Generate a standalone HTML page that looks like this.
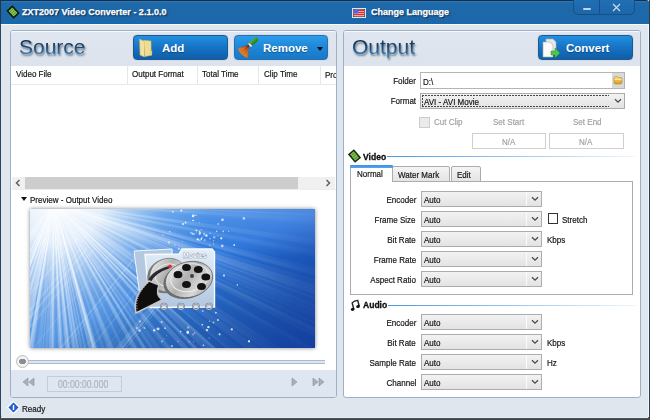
<!DOCTYPE html>
<html><head><meta charset="utf-8"><style>
*{margin:0;padding:0;box-sizing:border-box}
html,body{width:650px;height:420px;overflow:hidden;background:#2e2a26}
body{position:relative;font-family:"Liberation Sans",sans-serif;font-size:9.5px;line-height:11px;color:#141414}
.a{position:absolute}
.t{white-space:nowrap;-webkit-text-stroke:.2px currentColor;transform:scaleX(.845);transform-origin:0 0}
.t.r{transform-origin:100% 0}
.g{color:#a2a2a2}
.tt{color:#fff;font-weight:bold;font-size:9px;-webkit-text-stroke:.25px #fff;text-shadow:1px 1px 1.5px #041c3a;white-space:nowrap}
.panel{background:#fff;border:1px solid #9cb0c6;border-radius:3px}
.phead{background:linear-gradient(#dfe6ef,#dce3ec);border-top:1px solid #f8fbfd}
.big{font-size:21px;line-height:24px;white-space:nowrap;color:rgba(0,0,0,0);text-shadow:1px 2px 2px rgba(20,40,60,.55)}
.bigg{font-size:21px;line-height:24px;white-space:nowrap;color:transparent;background:linear-gradient(#0c2440 15%,#1f4a72 50%,#3f88c4 92%);-webkit-background-clip:text;background-clip:text}
.btn{border:1px solid #1d5a92;border-radius:4px;background:linear-gradient(#2290e2,#1673c4 50%,#0f5ea8);box-shadow:0 0 1px rgba(20,60,100,.5)}
.btn2{border-color:#2570b0;background:linear-gradient(#2c9cec,#1e86d6 50%,#1978c8)}
.bt{color:#fff;font-weight:bold;font-size:11.5px;line-height:14px;white-space:nowrap;text-shadow:0 1px 1px rgba(0,0,0,.35)}
.sel{border:1px solid #acacac;background:linear-gradient(#f2f2f2,#e3e3e3)}
.sel i{position:absolute;right:14px;top:0;width:1px;height:100%;background:#fcfcfc}
.sel svg{position:absolute;right:2px;top:4px}
.sep{width:1px;background:#e4e8ee}
</style></head><body>
<div class="a" style="left:0;top:0;width:650px;height:418px;background:#dfe6ee;border-left:1px solid #2c4560;border-right:1px solid #26405a;border-radius:0 0 3px 3px"></div>
<div class="a" style="left:648px;top:24px;width:1px;height:393px;background:#f2f6fa"></div>
<div class="a" style="left:0;top:0;width:649px;height:24px;background:linear-gradient(#3478b6 0,#1e69aa 2px,#1c67a9);border-top:1px solid #16304a;border-left:1px solid #24364c;border-radius:0 3px 0 0"></div>
<div class="a" style="left:1px;top:24px;width:647px;height:1px;background:#f6f9fc"></div>
<svg class="a" style="left:6px;top:5px" width="14" height="14"><g transform="rotate(-42 7 7)"><rect x="3.6" y="2.4" width="6.8" height="9.2" fill="#86c84a" stroke="#0e1a0a" stroke-width="1.6"/><path d="M4.8 4.8H9.2M4.8 7H9.2M4.8 9.2H9.2" stroke="#4a8a2a" stroke-width=".8"/></g></svg>
<div class="a tt" style="left:22px;top:7px">ZXT2007 Video Converter - 2.1.0.0</div>
<svg class="a" style="left:352px;top:8px" width="14" height="10"><rect x=".5" y=".5" width="13" height="9" fill="none" stroke="#dfe8f2"/><rect x="1" y="1" width="12" height="8" fill="#222"/><rect x="1.5" y="1.5" width="11" height="7" fill="#f4a8a8"/><path d="M1.5 2.5H12.5M1.5 4.5H12.5M1.5 6.5H12.5" stroke="#e02c2c" stroke-width="1"/><rect x="1.5" y="1.5" width="5" height="4" fill="#5a64e0"/></svg>
<div class="a tt" style="left:371px;top:7px">Change Language</div>
<div class="a" style="left:573px;top:-3px;width:62px;height:18px;border:1px solid #15508a;border-radius:0 0 5px 5px;background:linear-gradient(#2170b4,#1d66aa)"></div>
<div class="a" style="left:599px;top:0;width:1px;height:14px;background:#15508a"></div>
<div class="a" style="left:583px;top:8px;width:8px;height:2px;background:#c4d4e4;border-radius:1px"></div>
<svg class="a" style="left:612px;top:3px" width="9" height="9"><path d="M1 1L8 8M8 1L1 8" stroke="#d4e0ec" stroke-width="1.1"/></svg>
<div class="a panel" style="left:10px;top:30px;width:327px;height:368px"></div>
<div class="a phead" style="left:11px;top:31px;width:325px;height:35px;border-radius:2px 2px 0 0"></div>
<div class="a big" style="left:19px;top:35px">Source</div>
<div class="a bigg" style="left:19px;top:35px">Source</div>
<div class="a btn" style="left:133px;top:35px;width:95px;height:25px"></div>
<svg class="a" style="left:138px;top:38px" width="16" height="20"><defs><linearGradient id="fy" x1="0" x2="1"><stop offset="0" stop-color="#f0d888"/><stop offset="1" stop-color="#f8eab8"/></linearGradient></defs><path d="M5.5 2.2L13 3L13.2 17.2L7 18.5Z" fill="#f0dc90" stroke="#d8b860" stroke-width=".5"/><path d="M12.2 12.5L14.2 13L14 17.3L12.4 17.5Z" fill="#e8cc70"/><path d="M1.5 1L6 3.2L6.5 19L2 17Z" fill="url(#fy)" stroke="#d0b060" stroke-width=".5"/></svg>
<div class="a bt" style="left:162px;top:41px">Add</div>
<div class="a btn btn2" style="left:234px;top:35px;width:94px;height:25px"></div>
<svg class="a" style="left:236px;top:37px" width="22" height="22"><defs><linearGradient id="br" x1="0" y1="1" x2="1" y2="0"><stop offset="0" stop-color="#f8a040"/><stop offset=".55" stop-color="#d06818"/><stop offset="1" stop-color="#7a1a08"/></linearGradient><linearGradient id="hd" x1="0" y1="0" x2="1" y2="1"><stop offset="0" stop-color="#5cc040"/><stop offset="1" stop-color="#1a6a10"/></linearGradient></defs><path d="M15.2 6.8L20.2 2.4" stroke="url(#hd)" stroke-width="4.4" stroke-linecap="round"/><path d="M12.6 6.6L15.6 9.4" stroke="#f4f4f4" stroke-width="1.6"/><path d="M13.2 7.6L1.8 11.4Q4.5 18.5 11.8 21Z" fill="url(#br)"/><path d="M5 13L10 10M7 16L11.5 11M9.5 19L12.5 12" stroke="#f8b060" stroke-width=".6" opacity=".6"/></svg>
<div class="a bt" style="left:263px;top:41px">Remove</div>
<div class="a" style="left:317px;top:47px;width:0;height:0;border-left:3.5px solid transparent;border-right:3.5px solid transparent;border-top:4px solid #0a0a0a"></div>
<div class="a t" style="left:16px;top:68.4px;">Video File</div>
<div class="a sep" style="left:127px;top:66px;height:18px"></div>
<div class="a t" style="left:132px;top:68.4px;">Output Format</div>
<div class="a sep" style="left:197px;top:66px;height:18px"></div>
<div class="a t" style="left:202px;top:68.4px;">Total Time</div>
<div class="a sep" style="left:258px;top:66px;height:18px"></div>
<div class="a t" style="left:264px;top:68.4px;">Clip Time</div>
<div class="a sep" style="left:320px;top:66px;height:18px"></div>
<div class="a" style="left:325px;top:69px;width:11px;height:12px;overflow:hidden"><div class="t">Pro</div></div>
<div class="a" style="left:11px;top:84px;width:325px;height:1px;background:#e6ebf1"></div>
<div class="a" style="left:12px;top:177px;width:323px;height:12px;background:#f0f0f0"></div>
<div class="a" style="left:25px;top:177px;width:273px;height:12px;background:#cdcdcd"></div>
<svg class="a" style="left:15px;top:179px" width="6" height="8"><path d="M4.5 1L1.5 4L4.5 7" fill="none" stroke="#606060" stroke-width="1.5"/></svg>
<svg class="a" style="left:325px;top:179px" width="6" height="8"><path d="M1.5 1L4.5 4L1.5 7" fill="none" stroke="#606060" stroke-width="1.5"/></svg>
<div class="a" style="left:11px;top:189px;width:325px;height:1px;background:#e8eef6"></div>
<div class="a" style="left:21px;top:197px;width:0;height:0;border-left:3.5px solid transparent;border-right:3.5px solid transparent;border-top:4px solid #111"></div>
<div class="a t" style="left:30px;top:194.4px;">Preview - Output Video</div>
<svg class="a" style="left:30px;top:209px;box-shadow:0 0 4px rgba(0,0,0,.5)" width="285" height="139"><defs>
<linearGradient id="bg" x1="0" y1="0" x2="1" y2="0">
<stop offset="0" stop-color="#5a98e2"/><stop offset=".35" stop-color="#3c84dc"/><stop offset=".6" stop-color="#2a76dc"/><stop offset="1" stop-color="#1e62d4"/>
</linearGradient>
<linearGradient id="bg2" x1="0" y1="0" x2="1" y2="1">
<stop offset="0" stop-color="#000" stop-opacity="0"/><stop offset=".5" stop-color="#000" stop-opacity="0"/><stop offset="1" stop-color="#081c70" stop-opacity=".5"/>
</linearGradient>
<linearGradient id="bg3" x1="0" y1="0" x2="0" y2="1">
<stop offset="0" stop-color="#a0d4ff" stop-opacity=".35"/><stop offset=".35" stop-color="#a0d4ff" stop-opacity="0"/>
</linearGradient>
<radialGradient id="gl" cx="28" cy="-10" r="150" gradientUnits="userSpaceOnUse">
<stop offset="0" stop-color="#fff" stop-opacity="1"/><stop offset=".3" stop-color="#fff" stop-opacity=".8"/><stop offset=".7" stop-color="#d8ecff" stop-opacity=".2"/><stop offset="1" stop-color="#a0d0ff" stop-opacity="0"/>
</radialGradient>
<radialGradient id="rg" cx="24" cy="-6" r="260" gradientUnits="userSpaceOnUse">
<stop offset="0" stop-color="#fff" stop-opacity="1"/><stop offset=".3" stop-color="#fff" stop-opacity=".6"/><stop offset=".6" stop-color="#fff" stop-opacity=".22"/><stop offset="1" stop-color="#fff" stop-opacity=".05"/>
</radialGradient>
<linearGradient id="reel" x1="0" y1="0" x2="1" y2="1"><stop offset="0" stop-color="#f8f8f8"/><stop offset=".45" stop-color="#b0b0b0"/><stop offset=".7" stop-color="#d8d8d8"/><stop offset="1" stop-color="#8a8a8a"/></linearGradient>
<linearGradient id="fold" x1="0" y1="0" x2="0" y2="1"><stop offset="0" stop-color="#e4eef8"/><stop offset="1" stop-color="#b0c6e0"/></linearGradient>
</defs>
<rect width="285" height="139" fill="url(#bg)"/>
<rect width="285" height="139" fill="url(#bg2)"/>
<rect width="285" height="139" fill="url(#bg3)"/>
<path d="M24 -6L25.2 414.0L17.2 413.9Z" fill="url(#rg)" opacity="0.76"/><path d="M24 -6L7.3 413.7L-1.3 413.2Z" fill="url(#rg)" opacity="0.35"/><path d="M24 -6L-126.2 386.2L-131.8 384.0Z" fill="url(#rg)" opacity="0.30"/><path d="M24 -6L377.9 220.2L376.4 222.5Z" fill="url(#rg)" opacity="0.39"/><path d="M24 -6L-223.8 333.1L-231.7 327.2Z" fill="url(#rg)" opacity="0.61"/><path d="M24 -6L443.6 11.4L443.5 14.3Z" fill="url(#rg)" opacity="0.33"/><path d="M24 -6L436.8 71.6L435.2 79.4Z" fill="url(#rg)" opacity="0.16"/><path d="M24 -6L-154.3 374.3L-163.5 369.8Z" fill="url(#rg)" opacity="0.54"/><path d="M24 -6L-43.4 408.6L-49.0 407.6Z" fill="url(#rg)" opacity="0.50"/><path d="M24 -6L-239.5 321.0L-248.0 314.0Z" fill="url(#rg)" opacity="0.71"/><path d="M24 -6L231.1 359.4L228.4 360.9Z" fill="url(#rg)" opacity="0.41"/><path d="M24 -6L128.8 400.7L121.9 402.4Z" fill="url(#rg)" opacity="0.72"/><path d="M24 -6L-159.7 371.7L-164.0 369.6Z" fill="url(#rg)" opacity="0.25"/><path d="M24 -6L83.8 409.7L76.7 410.7Z" fill="url(#rg)" opacity="0.79"/><path d="M24 -6L403.0 175.1L400.5 180.1Z" fill="url(#rg)" opacity="0.42"/><path d="M24 -6L431.8 94.5L428.9 105.8Z" fill="url(#rg)" opacity="0.49"/><path d="M24 -6L436.1 75.3L435.5 78.2Z" fill="url(#rg)" opacity="0.19"/><path d="M24 -6L262.1 340.0L255.7 344.3Z" fill="url(#rg)" opacity="0.56"/><path d="M24 -6L390.9 198.4L385.9 207.2Z" fill="url(#rg)" opacity="0.20"/><path d="M24 -6L424.3 121.1L422.6 126.4Z" fill="url(#rg)" opacity="0.22"/><path d="M24 -6L-129.3 385.0L-141.5 380.0Z" fill="url(#rg)" opacity="0.42"/><path d="M24 -6L427.1 111.8L424.2 121.5Z" fill="url(#rg)" opacity="0.45"/><path d="M24 -6L349.4 259.6L345.9 263.8Z" fill="url(#rg)" opacity="0.22"/><path d="M24 -6L171.8 387.1L168.9 388.2Z" fill="url(#rg)" opacity="0.41"/><path d="M24 -6L409.2 161.4L405.3 170.2Z" fill="url(#rg)" opacity="0.24"/><path d="M24 -6L95.3 407.9L87.2 409.2Z" fill="url(#rg)" opacity="0.78"/><path d="M24 -6L-171.3 365.8L-174.9 363.9Z" fill="url(#rg)" opacity="0.35"/><path d="M24 -6L-142.1 379.8L-146.2 377.9Z" fill="url(#rg)" opacity="0.39"/><path d="M24 -6L-208.9 343.5L-220.5 335.5Z" fill="url(#rg)" opacity="0.36"/><path d="M24 -6L-5.9 412.9L-9.4 412.7Z" fill="url(#rg)" opacity="0.48"/><path d="M24 -6L355.7 251.6L348.9 260.2Z" fill="url(#rg)" opacity="0.23"/><path d="M24 -6L376.6 222.1L373.4 227.0Z" fill="url(#rg)" opacity="0.36"/><path d="M24 -6L391.2 197.8L388.8 202.2Z" fill="url(#rg)" opacity="0.17"/><path d="M24 -6L-162.3 370.4L-167.4 367.9Z" fill="url(#rg)" opacity="0.59"/><path d="M24 -6L246.7 350.1L242.0 353.0Z" fill="url(#rg)" opacity="0.26"/><path d="M24 -6L321.1 290.9L316.3 295.6Z" fill="url(#rg)" opacity="0.35"/><path d="M24 -6L288.7 320.1L278.2 328.3Z" fill="url(#rg)" opacity="0.45"/><path d="M24 -6L-37.9 409.4L-47.3 407.9Z" fill="url(#rg)" opacity="0.63"/><path d="M24 -6L443.6 11.7L442.8 25.2Z" fill="url(#rg)" opacity="0.16"/><path d="M24 -6L-222.6 334.0L-230.7 327.9Z" fill="url(#rg)" opacity="0.26"/><path d="M24 -6L-82.9 400.2L-97.0 396.2Z" fill="url(#rg)" opacity="0.43"/><path d="M24 -6L413.9 150.2L408.7 162.6Z" fill="url(#rg)" opacity="0.41"/><path d="M24 -6L-66.2 404.2L-79.5 401.1Z" fill="url(#rg)" opacity="0.69"/><path d="M24 -6L-54.5 406.6L-67.3 404.0Z" fill="url(#rg)" opacity="0.75"/><path d="M24 -6L-123.2 387.4L-131.9 384.0Z" fill="url(#rg)" opacity="0.72"/><path d="M24 -6L141.6 397.2L132.2 399.8Z" fill="url(#rg)" opacity="0.57"/><path d="M24 -6L403.4 174.1L397.6 185.9Z" fill="url(#rg)" opacity="0.50"/><path d="M24 -6L137.5 398.4L128.4 400.8Z" fill="url(#rg)" opacity="0.65"/><path d="M24 -6L-151.3 375.7L-161.7 370.7Z" fill="url(#rg)" opacity="0.30"/><path d="M24 -6L406.2 168.2L404.0 172.8Z" fill="url(#rg)" opacity="0.32"/><path d="M24 -6L69.2 411.6L55.6 412.8Z" fill="url(#rg)" opacity="0.59"/><path d="M24 -6L443.8 6.5L443.4 17.1Z" fill="url(#rg)" opacity="0.26"/><path d="M24 -6L440.2 50.5L438.6 60.8Z" fill="url(#rg)" opacity="0.47"/><path d="M24 -6L-183.1 359.4L-192.1 354.1Z" fill="url(#rg)" opacity="0.43"/><path d="M24 -6L424.7 119.9L420.4 132.8Z" fill="url(#rg)" opacity="0.43"/><path d="M24 -6L138.5 398.1L132.6 399.7Z" fill="url(#rg)" opacity="0.57"/><path d="M24 -6L418.7 137.6L414.1 149.5Z" fill="url(#rg)" opacity="0.44"/><path d="M24 -6L-218.1 337.2L-221.6 334.7Z" fill="url(#rg)" opacity="0.40"/><path d="M24 -6L206.4 372.3L199.7 375.5Z" fill="url(#rg)" opacity="0.37"/><path d="M24 -6L70.9 411.4L58.3 412.6Z" fill="url(#rg)" opacity="0.42"/><path d="M24 -6L93.0 408.3L90.4 408.7Z" fill="url(#rg)" opacity="0.29"/><path d="M24 -6L330.7 281.0L324.2 287.7Z" fill="url(#rg)" opacity="0.64"/><path d="M24 -6L-126.3 386.2L-129.9 384.8Z" fill="url(#rg)" opacity="0.26"/><path d="M24 -6L336.7 274.3L333.3 278.2Z" fill="url(#rg)" opacity="0.71"/><path d="M24 -6L443.3 17.8L442.8 25.6Z" fill="url(#rg)" opacity="0.37"/><path d="M24 -6L-34.4 409.9L-48.3 407.7Z" fill="url(#rg)" opacity="0.69"/><path d="M24 -6L248.8 348.8L245.1 351.1Z" fill="url(#rg)" opacity="0.51"/><path d="M24 -6L419.6 135.2L418.1 139.3Z" fill="url(#rg)" opacity="0.40"/><path d="M24 -6L430.5 99.5L428.3 107.9Z" fill="url(#rg)" opacity="0.39"/><path d="M24 -6L-100.4 395.1L-111.9 391.4Z" fill="url(#rg)" opacity="0.47"/><path d="M24 -6L310.0 301.6L301.7 309.1Z" fill="url(#rg)" opacity="0.76"/><path d="M24 -6L422.7 126.0L418.3 138.7Z" fill="url(#rg)" opacity="0.37"/><path d="M24 -6L21.3 414.0L9.2 413.7Z" fill="url(#rg)" opacity="0.73"/><path d="M24 -6L86.7 409.3L82.0 410.0Z" fill="url(#rg)" opacity="0.61"/><path d="M24 -6L-139.4 380.9L-149.6 376.5Z" fill="url(#rg)" opacity="0.60"/><path d="M24 -6L367.1 236.2L358.6 247.8Z" fill="url(#rg)" opacity="0.49"/><path d="M24 -6L-121.4 388.0L-134.0 383.2Z" fill="url(#rg)" opacity="0.43"/><path d="M24 -6L161.8 390.7L154.6 393.2Z" fill="url(#rg)" opacity="0.30"/><path d="M24 -6L-112.5 391.2L-114.9 390.4Z" fill="url(#rg)" opacity="0.52"/><path d="M24 -6L318.5 293.4L315.4 296.4Z" fill="url(#rg)" opacity="0.69"/><path d="M24 -6L-124.0 387.1L-127.8 385.6Z" fill="url(#rg)" opacity="0.33"/><path d="M24 -6L-80.3 400.8L-90.8 398.0Z" fill="url(#rg)" opacity="0.71"/><path d="M24 -6L67.1 411.8L63.9 412.1Z" fill="url(#rg)" opacity="0.77"/><path d="M24 -6L415.5 146.2L411.2 156.6Z" fill="url(#rg)" opacity="0.25"/><path d="M24 -6L50.2 413.2L41.0 413.7Z" fill="url(#rg)" opacity="0.71"/><path d="M24 -6L144.0 396.5L131.1 400.1Z" fill="url(#rg)" opacity="0.71"/><path d="M24 -6L373.3 227.2L368.4 234.5Z" fill="url(#rg)" opacity="0.49"/><path d="M24 -6L249.6 348.3L242.4 352.7Z" fill="url(#rg)" opacity="0.54"/><path d="M24 -6L336.6 274.5L330.7 280.9Z" fill="url(#rg)" opacity="0.78"/><path d="M24 -6L-130.1 384.7L-137.8 381.6Z" fill="url(#rg)" opacity="0.56"/><path d="M24 -6L318.8 293.2L313.5 298.3Z" fill="url(#rg)" opacity="0.55"/><path d="M24 -6L-202.0 348.0L-208.8 343.6Z" fill="url(#rg)" opacity="0.40"/><path d="M24 -6L424.4 120.7L420.2 133.5Z" fill="url(#rg)" opacity="0.44"/><path d="M24 -6L182.2 383.1L173.0 386.7Z" fill="url(#rg)" opacity="0.36"/><path d="M24 -6L285.6 322.6L283.6 324.2Z" fill="url(#rg)" opacity="0.68"/><path d="M24 -6L437.3 68.5L436.2 74.6Z" fill="url(#rg)" opacity="0.39"/><path d="M24 -6L-12.7 412.4L-23.9 411.3Z" fill="url(#rg)" opacity="0.31"/><path d="M24 -6L415.9 145.1L414.2 149.4Z" fill="url(#rg)" opacity="0.24"/><path d="M24 -6L105.5 406.0L98.3 407.4Z" fill="url(#rg)" opacity="0.46"/><path d="M24 -6L272.7 332.4L264.5 338.3Z" fill="url(#rg)" opacity="0.36"/><path d="M24 -6L46.0 413.4L36.2 413.8Z" fill="url(#rg)" opacity="0.72"/><path d="M24 -6L233.4 358.1L222.6 364.1Z" fill="url(#rg)" opacity="0.66"/><path d="M24 -6L184.8 382.0L172.0 387.0Z" fill="url(#rg)" opacity="0.42"/><path d="M24 -6L347.3 262.1L344.8 265.1Z" fill="url(#rg)" opacity="0.46"/><path d="M24 -6L390.0 200.0L388.3 203.0Z" fill="url(#rg)" opacity="0.24"/><path d="M24 -6L113.5 404.3L109.9 405.1Z" fill="url(#rg)" opacity="0.68"/><path d="M24 -6L-58.6 405.8L-63.3 404.8Z" fill="url(#rg)" opacity="0.26"/><path d="M24 -6L-197.2 351.0L-200.3 349.1Z" fill="url(#rg)" opacity="0.78"/><path d="M24 -6L-102.3 394.6L-112.5 391.2Z" fill="url(#rg)" opacity="0.53"/><path d="M24 -6L442.7 26.9L442.5 29.6Z" fill="url(#rg)" opacity="0.19"/><path d="M22.1 150 L112.1 40" stroke="#e8f4ff" stroke-width="1.6" opacity="0.18"/><path d="M79.6 150 L169.6 40" stroke="#e8f4ff" stroke-width="1.7" opacity="0.18"/><path d="M-84.8 150 L5.2 40" stroke="#e8f4ff" stroke-width="1.7" opacity="0.15"/><path d="M26.8 150 L116.8 40" stroke="#e8f4ff" stroke-width="0.7" opacity="0.21"/><path d="M-5.6 150 L84.4 40" stroke="#e8f4ff" stroke-width="1.3" opacity="0.11"/><path d="M13.3 150 L103.3 40" stroke="#e8f4ff" stroke-width="0.9" opacity="0.08"/><path d="M-39.7 150 L50.3 40" stroke="#e8f4ff" stroke-width="1.5" opacity="0.21"/><path d="M-61.3 150 L28.7 40" stroke="#e8f4ff" stroke-width="0.8" opacity="0.19"/><path d="M21.1 150 L111.1 40" stroke="#e8f4ff" stroke-width="0.6" opacity="0.10"/><path d="M66.9 150 L156.9 40" stroke="#e8f4ff" stroke-width="0.9" opacity="0.11"/><path d="M86.8 150 L176.8 40" stroke="#e8f4ff" stroke-width="0.9" opacity="0.20"/><path d="M83.1 150 L173.1 40" stroke="#e8f4ff" stroke-width="1.4" opacity="0.16"/><path d="M-53.1 150 L36.9 40" stroke="#e8f4ff" stroke-width="1.4" opacity="0.21"/><path d="M84.0 150 L174.0 40" stroke="#e8f4ff" stroke-width="1.0" opacity="0.21"/><path d="M-25.0 150 L65.0 40" stroke="#e8f4ff" stroke-width="0.8" opacity="0.10"/><path d="M-78.3 150 L11.7 40" stroke="#e8f4ff" stroke-width="1.3" opacity="0.12"/><path d="M-89.4 150 L0.6 40" stroke="#e8f4ff" stroke-width="1.0" opacity="0.17"/><path d="M-34.2 150 L55.8 40" stroke="#e8f4ff" stroke-width="1.2" opacity="0.19"/><path d="M-33.2 150 L56.8 40" stroke="#e8f4ff" stroke-width="1.4" opacity="0.15"/><path d="M-79.7 150 L10.3 40" stroke="#e8f4ff" stroke-width="0.6" opacity="0.22"/><path d="M45.0 150 L135.0 40" stroke="#e8f4ff" stroke-width="0.6" opacity="0.20"/><path d="M51.8 150 L141.8 40" stroke="#e8f4ff" stroke-width="1.3" opacity="0.13"/><path d="M-88.4 150 L1.6 40" stroke="#e8f4ff" stroke-width="0.8" opacity="0.09"/><path d="M81.9 150 L171.9 40" stroke="#e8f4ff" stroke-width="1.5" opacity="0.11"/><path d="M77.3 150 L167.3 40" stroke="#e8f4ff" stroke-width="1.0" opacity="0.21"/><path d="M-26.1 150 L63.9 40" stroke="#e8f4ff" stroke-width="1.5" opacity="0.15"/><rect width="285" height="139" fill="url(#gl)"/><circle cx="183.5" cy="35.0" r="0.6" fill="#fff" opacity="0.69"/><circle cx="187.8" cy="26.7" r="0.5" fill="#fff" opacity="0.64"/><circle cx="184.2" cy="28.2" r="1.2" fill="#fff" opacity="0.47"/><circle cx="142.9" cy="2.8" r="1.0" fill="#fff" opacity="0.62"/><circle cx="114.7" cy="119.3" r="0.7" fill="#fff" opacity="0.48"/><circle cx="159.4" cy="40.9" r="0.6" fill="#fff" opacity="0.72"/><circle cx="134.0" cy="130.1" r="0.6" fill="#fff" opacity="0.43"/><circle cx="162.8" cy="11.5" r="0.8" fill="#fff" opacity="0.72"/><circle cx="141.9" cy="137.2" r="1.1" fill="#fff" opacity="0.53"/><circle cx="106.7" cy="119.1" r="1.1" fill="#fff" opacity="0.56"/><circle cx="121.8" cy="58.1" r="1.1" fill="#fff" opacity="0.48"/><circle cx="189.6" cy="125.3" r="1.1" fill="#fff" opacity="0.72"/><circle cx="141.4" cy="96.6" r="1.0" fill="#fff" opacity="0.72"/><circle cx="185.9" cy="103.7" r="0.9" fill="#fff" opacity="0.77"/><circle cx="163.1" cy="6.9" r="1.3" fill="#fff" opacity="0.85"/><circle cx="152.1" cy="32.8" r="0.5" fill="#fff" opacity="0.65"/><circle cx="174.1" cy="24.6" r="1.1" fill="#fff" opacity="0.47"/><circle cx="144.9" cy="36.1" r="0.6" fill="#fff" opacity="0.65"/><circle cx="188.0" cy="110.9" r="1.2" fill="#fff" opacity="0.55"/><circle cx="149.0" cy="39.7" r="1.3" fill="#fff" opacity="0.48"/><circle cx="171.3" cy="30.0" r="0.9" fill="#fff" opacity="0.72"/><circle cx="186.7" cy="22.3" r="0.8" fill="#fff" opacity="0.71"/><circle cx="179.0" cy="71.7" r="1.0" fill="#fff" opacity="0.77"/><circle cx="192.5" cy="10.7" r="1.2" fill="#fff" opacity="0.84"/><circle cx="164.0" cy="25.0" r="1.0" fill="#fff" opacity="0.43"/><circle cx="172.4" cy="28.3" r="0.8" fill="#fff" opacity="0.43"/><circle cx="174.3" cy="26.1" r="0.8" fill="#fff" opacity="0.41"/><circle cx="171.4" cy="20.6" r="0.7" fill="#fff" opacity="0.59"/><circle cx="192.3" cy="36.9" r="1.3" fill="#fff" opacity="0.66"/><circle cx="164.6" cy="124.1" r="0.8" fill="#fff" opacity="0.55"/><circle cx="157.7" cy="123.7" r="1.3" fill="#fff" opacity="0.69"/><circle cx="166.4" cy="21.3" r="0.9" fill="#fff" opacity="0.94"/><circle cx="179.6" cy="36.3" r="0.8" fill="#fff" opacity="0.49"/><circle cx="114.2" cy="118.8" r="0.8" fill="#fff" opacity="0.52"/><circle cx="201.8" cy="120.3" r="1.1" fill="#fff" opacity="0.85"/><circle cx="159.2" cy="132.8" r="0.8" fill="#fff" opacity="0.42"/><circle cx="167.7" cy="30.4" r="1.1" fill="#fff" opacity="0.93"/><circle cx="213.9" cy="9.4" r="1.3" fill="#fff" opacity="0.60"/><circle cx="171.5" cy="29.2" r="0.7" fill="#fff" opacity="0.74"/><circle cx="194.0" cy="66.6" r="1.0" fill="#fff" opacity="0.84"/><circle cx="151.3" cy="1.6" r="1.1" fill="#fff" opacity="0.81"/><circle cx="173.4" cy="136.3" r="0.8" fill="#fff" opacity="0.84"/><circle cx="149.6" cy="55.8" r="1.3" fill="#fff" opacity="0.80"/><circle cx="176.4" cy="26.5" r="1.2" fill="#fff" opacity="0.84"/><circle cx="190.7" cy="-5.3" r="1.0" fill="#fff" opacity="0.59"/><circle cx="157.8" cy="123.1" r="1.3" fill="#fff" opacity="0.76"/><circle cx="178.4" cy="118.1" r="1.2" fill="#fff" opacity="0.85"/><circle cx="169.8" cy="31.2" r="0.7" fill="#fff" opacity="0.72"/><circle cx="162.6" cy="24.8" r="1.2" fill="#fff" opacity="0.59"/><circle cx="110.0" cy="112.2" r="0.8" fill="#fff" opacity="0.90"/><circle cx="126.4" cy="119.8" r="0.5" fill="#fff" opacity="0.64"/><circle cx="198.7" cy="22.5" r="0.6" fill="#fff" opacity="0.66"/><circle cx="135.0" cy="119.2" r="0.9" fill="#fff" opacity="0.71"/><circle cx="179.2" cy="129.1" r="0.7" fill="#fff" opacity="0.55"/><circle cx="124.2" cy="121.4" r="1.1" fill="#fff" opacity="0.90"/><circle cx="155.6" cy="13.5" r="0.9" fill="#fff" opacity="0.78"/><circle cx="128.2" cy="119.9" r="1.3" fill="#fff" opacity="0.78"/><circle cx="204.2" cy="36.1" r="0.9" fill="#fff" opacity="0.92"/><circle cx="163.0" cy="125.5" r="0.9" fill="#fff" opacity="0.44"/><circle cx="191.3" cy="29.3" r="1.1" fill="#fff" opacity="0.89"/><circle cx="165.0" cy="6.2" r="0.6" fill="#fff" opacity="0.89"/><circle cx="132.0" cy="132.4" r="0.8" fill="#fff" opacity="0.67"/><circle cx="193.2" cy="22.4" r="0.8" fill="#fff" opacity="0.68"/><circle cx="174.7" cy="31.1" r="1.1" fill="#fff" opacity="0.41"/><circle cx="150.7" cy="122.6" r="0.8" fill="#fff" opacity="0.74"/><circle cx="219.0" cy="132.3" r="1.1" fill="#fff" opacity="0.93"/><circle cx="169.6" cy="25.1" r="1.1" fill="#fff" opacity="0.55"/><circle cx="138.9" cy="33.4" r="1.2" fill="#fff" opacity="0.54"/><circle cx="188.2" cy="15.0" r="1.1" fill="#fff" opacity="0.45"/><circle cx="163.6" cy="11.3" r="0.6" fill="#fff" opacity="0.92"/><circle cx="158.2" cy="118.4" r="1.2" fill="#fff" opacity="0.44"/><circle cx="155.4" cy="47.1" r="0.9" fill="#fff" opacity="0.91"/><circle cx="183.5" cy="31.8" r="0.7" fill="#fff" opacity="0.46"/><circle cx="180.2" cy="24.3" r="0.7" fill="#fff" opacity="0.57"/><circle cx="148.0" cy="132.3" r="0.6" fill="#fff" opacity="0.59"/><circle cx="170.0" cy="23.9" r="1.1" fill="#fff" opacity="0.70"/><circle cx="133.1" cy="26.1" r="0.6" fill="#fff" opacity="0.85"/><circle cx="139.7" cy="22.7" r="0.8" fill="#fff" opacity="0.68"/><circle cx="176.9" cy="121.1" r="1.2" fill="#fff" opacity="0.79"/><circle cx="136.7" cy="126.7" r="0.5" fill="#fff" opacity="0.47"/><circle cx="169.3" cy="13.6" r="0.6" fill="#fff" opacity="0.45"/><circle cx="179.6" cy="112.3" r="0.7" fill="#fff" opacity="0.53"/><circle cx="160.9" cy="23.6" r="0.9" fill="#fff" opacity="0.54"/><circle cx="207.3" cy="76.0" r="0.7" fill="#fff" opacity="0.93"/><circle cx="169.5" cy="22.4" r="0.8" fill="#fff" opacity="0.66"/><circle cx="163.6" cy="132.2" r="0.5" fill="#fff" opacity="0.55"/><circle cx="166.2" cy="23.9" r="0.5" fill="#fff" opacity="0.57"/><circle cx="153.1" cy="15.1" r="1.1" fill="#fff" opacity="0.76"/><circle cx="172.3" cy="115.8" r="0.8" fill="#fff" opacity="0.94"/><circle cx="166.3" cy="6.4" r="0.5" fill="#fff" opacity="0.86"/><circle cx="172.7" cy="102.0" r="1.1" fill="#fff" opacity="0.48"/><circle cx="109.5" cy="121.5" r="1.1" fill="#fff" opacity="0.85"/><circle cx="183.4" cy="113.5" r="1.1" fill="#fff" opacity="0.53"/><circle cx="180.1" cy="29.7" r="0.6" fill="#fff" opacity="0.86"/><circle cx="131.6" cy="112.9" r="1.0" fill="#fff" opacity="0.67"/><path d="M104.0 42.0L142.0 40.0L144.0 91.0L111.0 95.0Z" fill="#b4c8e0" stroke="#f0f6fc" stroke-width="1"/><path d="M115.0 45.5L149.0 45.0L152.0 40.0L182.0 40.0L184.5 43.0L184.5 98.0L120.0 98.5Z" fill="url(#fold)" stroke="#f8fbfe" stroke-width="1.4"/><text x="153" y="48.5" font-size="7" font-weight="bold" fill="#ffffff" font-family="Liberation Sans" stroke="#46607c" stroke-width=".5" paint-order="stroke">Movies</text><ellipse cx="136" cy="67" rx="19" ry="17" fill="#7a7a7a" transform="rotate(-20 136 67)"/><ellipse cx="138" cy="66" rx="18.5" ry="16.5" fill="url(#reel)" stroke="#6a6a6a" stroke-width=".6" transform="rotate(-20 138 66)"/><ellipse cx="138" cy="66" rx="13" ry="11" fill="none" stroke="#f0f0f0" stroke-width=".8" transform="rotate(-20 138 66)"/><ellipse cx="157" cy="72" rx="24" ry="17.5" fill="#6e6e6e" transform="rotate(-15 157 72)"/><ellipse cx="159" cy="70.5" rx="24" ry="17.7" fill="url(#reel)" stroke="#5a5a5a" stroke-width=".7" transform="rotate(-15 159 70.5)"/><ellipse cx="160" cy="69" rx="19" ry="13.5" fill="none" stroke="#ececec" stroke-width="1" transform="rotate(-15 159 70.5)"/><ellipse cx="156.5" cy="58.5" rx="4.4" ry="3.6" fill="#121212"/><ellipse cx="168.3" cy="60.5" rx="4.4" ry="3.6" fill="#121212"/><ellipse cx="175.8" cy="68" rx="4.4" ry="3.6" fill="#121212"/><ellipse cx="171.5" cy="77.5" rx="4.4" ry="3.6" fill="#121212"/><ellipse cx="156.5" cy="75.5" rx="4.4" ry="3.6" fill="#121212"/><ellipse cx="148" cy="65.69999999999999" rx="4.4" ry="3.6" fill="#121212"/><circle cx="162" cy="67" r="2" fill="#404040"/><path d="M140.0 57.0Q122.0 61.0 118.0 72.0L121.0 73.0Q125.0 64.0 140.0 59.0Z" fill="#2a2a2a"/><path d="M119.0 72.0Q102.0 87.0 106.0 104.0L132.0 91.0Q125.0 85.0 129.0 76.0Z" fill="#0e0e0e" stroke="#c4c4c4" stroke-width="1.6"/><path d="M117.5 74.5Q104.0 88.0 107.5 101.5" fill="none" stroke="#d0d0d0" stroke-width="1" stroke-dasharray="1 1.5"/><circle cx="140" cy="57.5" r="1.8" fill="#e82828"/><circle cx="134" cy="97.5" r="3" fill="none" stroke="#6a7078" stroke-width="1.6"/><circle cx="134" cy="97.5" r="3" fill="none" stroke="#e0e4e8" stroke-width=".7"/><circle cx="151" cy="97.5" r="3" fill="none" stroke="#6a7078" stroke-width="1.6"/><circle cx="151" cy="97.5" r="3" fill="none" stroke="#e0e4e8" stroke-width=".7"/><circle cx="166" cy="97.5" r="3" fill="none" stroke="#6a7078" stroke-width="1.6"/><circle cx="166" cy="97.5" r="3" fill="none" stroke="#e0e4e8" stroke-width=".7"/><circle cx="179" cy="97.5" r="3" fill="none" stroke="#6a7078" stroke-width="1.6"/><circle cx="179" cy="97.5" r="3" fill="none" stroke="#e0e4e8" stroke-width=".7"/></svg>
<div class="a" style="left:18px;top:360px;width:307px;height:4px;border-top:1px solid #a8bcd0;border-bottom:1px solid #a8bcd0;background:#dde6f0"></div>
<div class="a" style="left:16px;top:355px;width:13px;height:13px;border-radius:50%;border:1.5px solid #bcbcbc;background:radial-gradient(ellipse 3.6px 2.9px,#8a8c8e 0 88%,#f0f2f4 100%)"></div>
<div class="a" style="left:11px;top:370px;width:325px;height:27px;background:#dde6f1;border-radius:0 0 2px 2px"></div>
<svg class="a" style="left:22px;top:377px" width="14" height="10"><path d="M6 1L1 5L6 9Z M12 1L7 5L12 9Z" fill="#a8b0b8" stroke="#8a929a" stroke-width=".6"/></svg>
<div class="a" style="left:47px;top:376px;width:75px;height:16px;border:1px solid #c4ccd4"></div>
<div class="a t g" style="left:58px;top:379.4px;color:#aab2ba;font-size:10px;transform:scaleX(.86)">00:00:00.000</div>
<svg class="a" style="left:290px;top:377px" width="8" height="10"><path d="M2 1L7 5L2 9Z" fill="#a8b0b8" stroke="#8a929a" stroke-width=".6"/></svg>
<svg class="a" style="left:311px;top:377px" width="14" height="10"><path d="M2 1L7 5L2 9Z M8 1L13 5L8 9Z" fill="#a8b0b8" stroke="#8a929a" stroke-width=".6"/></svg>
<div class="a panel" style="left:343px;top:30px;width:298px;height:368px"></div>
<div class="a phead" style="left:344px;top:31px;width:296px;height:35px;border-radius:2px 2px 0 0"></div>
<div class="a big" style="left:352px;top:35px">Output</div>
<div class="a bigg" style="left:352px;top:35px">Output</div>
<div class="a btn" style="left:538px;top:35px;width:95px;height:25px"></div>
<svg class="a" style="left:541px;top:38px" width="20" height="21"><path d="M5 1L12 1L15 4L15 15L5 15Z" fill="#e8e8e8" stroke="#b0b0b0" stroke-width=".6"/><path d="M2 4L9 4L12 7L12 19L2 19Z" fill="#fafafa" stroke="#a8a8a8" stroke-width=".6"/><path d="M10 13L14 13L14 10L19 15L14 20L14 17L10 17Z" fill="#52c44a" stroke="#2a8a2a" stroke-width=".5"/></svg>
<div class="a bt" style="left:566px;top:41px">Convert</div>
<div class="a t r" style="right:234px;top:75.4px;">Folder</div>
<div class="a" style="left:420px;top:72px;width:205px;height:17px;border:1px solid #b4b4b4;background:#fff"></div>
<div class="a" style="left:612px;top:73px;width:12px;height:15px;background:#d9d9d9"></div>
<svg class="a" style="left:613px;top:75px" width="10" height="10"><defs><linearGradient id="fo" x1="0" y1="0" x2="0" y2="1"><stop offset="0" stop-color="#fbe27a"/><stop offset="1" stop-color="#d89a20"/></linearGradient></defs><path d="M1 3Q1 1.5 2.5 1.5L4.5 1.5L5.5 2.5L7.5 2.5Q9 2.5 9 4L9 7.5Q9 9 7.5 9L2.5 9Q1 9 1 7.5Z" fill="url(#fo)" stroke="#b88418" stroke-width=".6"/><path d="M1.5 4.5H8.5" stroke="#fff4c0" stroke-width=".7"/></svg>
<div class="a t" style="left:423px;top:76.4px;">D:\</div>
<div class="a t r" style="right:234px;top:95.4px;">Format</div>
<div class="a sel" style="left:420px;top:93px;width:205px;height:16px"><svg width="8" height="6" style="top:4px"><path d="M1 1.2L4 4.2L7 1.2" fill="none" stroke="#4a4a4a" stroke-width="1.25"/></svg></div>
<div class="a" style="left:422px;top:95px;width:187px;height:1px;background:repeating-linear-gradient(90deg,#484848 0 2px,transparent 2px 3px)"></div>
<div class="a" style="left:422px;top:106px;width:187px;height:1px;background:repeating-linear-gradient(90deg,#484848 0 2px,transparent 2px 3px)"></div>
<div class="a" style="left:422px;top:95px;width:1px;height:12px;background:repeating-linear-gradient(#484848 0 2px,transparent 2px 3px)"></div>
<div class="a t" style="left:424px;top:96.4px;">AVI - AVI Movie</div>
<div class="a" style="left:419px;top:117px;width:11px;height:11px;border:1px solid #cdcdcd;background:#ebebeb"></div>
<div class="a t g" style="left:434px;top:116.4px;">Cut Clip</div>
<div class="a t g" style="left:493px;top:116.4px;">Set Start</div>
<div class="a t g" style="left:573px;top:116.4px;">Set End</div>
<div class="a" style="left:472px;top:133px;width:74px;height:16px;border:1px solid #cfcfcf"></div>
<div class="a" style="left:549px;top:133px;width:75px;height:16px;border:1px solid #cfcfcf"></div>
<div class="a t g" style="left:502px;top:136.4px;">N/A</div>
<div class="a t g" style="left:579px;top:136.4px;">N/A</div>
<svg class="a" style="left:348px;top:149px" width="13" height="14"><g transform="rotate(-40 6.5 7)"><rect x="3.3" y="2.2" width="6.4" height="9.6" fill="#7cc44a" stroke="#1a2614" stroke-width="1.5"/><path d="M4.3 4.6H8.7M4.3 7H8.7M4.3 9.4H8.7" stroke="#3f7a24" stroke-width=".8"/></g></svg>
<div class="a" style="left:363px;top:151px;font-size:9.5px;font-weight:bold;-webkit-text-stroke:.3px #000;color:#111;white-space:nowrap;transform:scaleX(.9);transform-origin:0 0">Video</div>
<div class="a" style="left:387px;top:156px;width:248px;height:1px;background:linear-gradient(90deg,#4a98e0,#a8d0f0 60%,#eef6fc)"></div>
<div class="a" style="left:350px;top:181px;width:283px;height:114px;border:1px solid #acacac;background:#fff"></div>
<div class="a" style="left:392px;top:166px;width:58px;height:16px;border:1px solid #acacac;border-radius:2px 2px 0 0;background:linear-gradient(#f4f4f4,#e4e4e4)"></div>
<div class="a t" style="left:398px;top:169.4px;">Water Mark</div>
<div class="a" style="left:451px;top:166px;width:30px;height:16px;border:1px solid #acacac;border-radius:2px 2px 0 0;background:linear-gradient(#f4f4f4,#e4e4e4)"></div>
<div class="a t" style="left:457px;top:169.4px;">Edit</div>
<div class="a" style="left:350px;top:165px;width:43px;height:17px;border:1px solid #acacac;border-bottom:none;background:#fff"></div>
<div class="a" style="left:350px;top:165px;width:43px;height:3px;border-radius:2px 2px 0 0;background:linear-gradient(#3a8ee4,#5aa6ee)"></div>
<div class="a t" style="left:357px;top:168.4px;">Normal</div>
<div class="a t r" style="right:234px;top:194.4px;">Encoder</div>
<div class="a sel" style="left:421px;top:191px;width:121px;height:16px"><i></i><svg width="8" height="6"><path d="M1 1.2L4 4.2L7 1.2" fill="none" stroke="#4a4a4a" stroke-width="1.25"/></svg></div>
<div class="a t" style="left:424px;top:194.4px;">Auto</div>
<div class="a t r" style="right:234px;top:214.4px;">Frame Size</div>
<div class="a sel" style="left:421px;top:211px;width:121px;height:16px"><i></i><svg width="8" height="6"><path d="M1 1.2L4 4.2L7 1.2" fill="none" stroke="#4a4a4a" stroke-width="1.25"/></svg></div>
<div class="a t" style="left:424px;top:214.4px;">Auto</div>
<div class="a t r" style="right:234px;top:234.4px;">Bit Rate</div>
<div class="a sel" style="left:421px;top:231px;width:121px;height:16px"><i></i><svg width="8" height="6"><path d="M1 1.2L4 4.2L7 1.2" fill="none" stroke="#4a4a4a" stroke-width="1.25"/></svg></div>
<div class="a t" style="left:424px;top:234.4px;">Auto</div>
<div class="a t r" style="right:234px;top:254.4px;">Frame Rate</div>
<div class="a sel" style="left:421px;top:251px;width:121px;height:16px"><i></i><svg width="8" height="6"><path d="M1 1.2L4 4.2L7 1.2" fill="none" stroke="#4a4a4a" stroke-width="1.25"/></svg></div>
<div class="a t" style="left:424px;top:254.4px;">Auto</div>
<div class="a t r" style="right:234px;top:274.4px;">Aspect Ratio</div>
<div class="a sel" style="left:421px;top:271px;width:121px;height:16px"><i></i><svg width="8" height="6"><path d="M1 1.2L4 4.2L7 1.2" fill="none" stroke="#4a4a4a" stroke-width="1.25"/></svg></div>
<div class="a t" style="left:424px;top:274.4px;">Auto</div>
<div class="a" style="left:548px;top:213px;width:10px;height:11px;border:1px solid #333;background:#fff"></div>
<div class="a t" style="left:561.5px;top:213.7px;">Stretch</div>
<div class="a t" style="left:547px;top:233.9px;">Kbps</div>
<svg class="a" style="left:349px;top:299px" width="12" height="12"><g transform="rotate(-15 6 6)"><path d="M3.8 9.5V3.2Q6.5 1.5 9.8 2.2V8" fill="none" stroke="#222" stroke-width="1.4"/><ellipse cx="2.6" cy="9.6" rx="1.9" ry="1.5" fill="#111"/><ellipse cx="8.6" cy="8.2" rx="1.9" ry="1.5" fill="#111"/></g></svg>
<div class="a" style="left:363px;top:299px;font-size:9.5px;font-weight:bold;-webkit-text-stroke:.3px #000;color:#111;white-space:nowrap;transform:scaleX(.9);transform-origin:0 0">Audio</div>
<div class="a" style="left:388px;top:305px;width:248px;height:1px;background:linear-gradient(90deg,#4a98e0,#a8d0f0 60%,#eef6fc)"></div>
<div class="a t r" style="right:234px;top:317.4px;">Encoder</div>
<div class="a sel" style="left:421px;top:314px;width:121px;height:16px"><i></i><svg width="8" height="6"><path d="M1 1.2L4 4.2L7 1.2" fill="none" stroke="#4a4a4a" stroke-width="1.25"/></svg></div>
<div class="a t" style="left:424px;top:317.4px;">Auto</div>
<div class="a t r" style="right:234px;top:337.4px;">Bit Rate</div>
<div class="a sel" style="left:421px;top:334px;width:121px;height:16px"><i></i><svg width="8" height="6"><path d="M1 1.2L4 4.2L7 1.2" fill="none" stroke="#4a4a4a" stroke-width="1.25"/></svg></div>
<div class="a t" style="left:424px;top:337.4px;">Auto</div>
<div class="a t r" style="right:234px;top:357.4px;">Sample Rate</div>
<div class="a sel" style="left:421px;top:354px;width:121px;height:16px"><i></i><svg width="8" height="6"><path d="M1 1.2L4 4.2L7 1.2" fill="none" stroke="#4a4a4a" stroke-width="1.25"/></svg></div>
<div class="a t" style="left:424px;top:357.4px;">Auto</div>
<div class="a t r" style="right:234px;top:377.4px;">Channel</div>
<div class="a sel" style="left:421px;top:374px;width:121px;height:16px"><i></i><svg width="8" height="6"><path d="M1 1.2L4 4.2L7 1.2" fill="none" stroke="#4a4a4a" stroke-width="1.25"/></svg></div>
<div class="a t" style="left:424px;top:377.4px;">Auto</div>
<div class="a t" style="left:547px;top:336.9px;">Kbps</div>
<div class="a t" style="left:547px;top:356.9px;">Hz</div>
<svg class="a" style="left:7px;top:401px" width="13" height="13"><path d="M6.5 .5L12.5 6.5L6.5 12.5L.5 6.5Z" fill="#2060d0" stroke="#fff" stroke-width="1.2"/><path d="M6.5 4V9" stroke="#fff" stroke-width="1.4"/></svg>
<div class="a t" style="left:22px;top:403.4px;">Ready</div>
<div class="a" style="left:1px;top:417px;width:647px;height:1px;background:#e6edf4"></div>
<div class="a" style="left:0;top:418px;width:650px;height:1px;background:#40546a"></div>
<div class="a" style="left:0;top:419px;width:650px;height:1px;background:#4a4236"></div>
</body></html>
